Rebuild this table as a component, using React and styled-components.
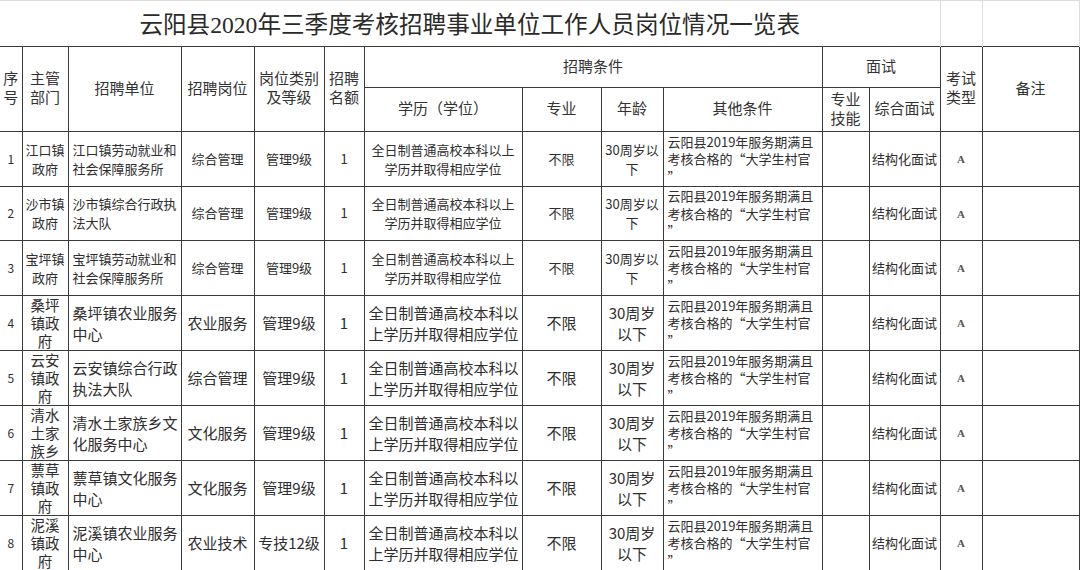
import React from "react";
import styled, { createGlobalStyle } from "styled-components";

const GlobalStyle = createGlobalStyle`
  html, body { margin: 0; padding: 0; background: #fff; }
  body { font-family: "Noto Sans CJK SC", "Liberation Sans", sans-serif; color: #2e2e2e; }
`;

const LINE = "#3a3a3a";
const FAINT = "#dcdcdc";

const Sheet = styled.table`
  width: 1079px;
  table-layout: fixed;
  border-collapse: collapse;
  border-spacing: 0;
`;

const TitleRow = styled.tr`
  height: 46px;
`;

const TitleCell = styled.td`
  border-top: 1px solid ${FAINT};
  border-right: 1px solid ${FAINT};
  padding: 0 0 2px;
  text-align: center;
  vertical-align: middle;
  font-family: "Liberation Serif", "Noto Sans CJK SC", serif;
  font-size: 23.6px;
  color: #2a2a2a;
  white-space: nowrap;
`;

const GhostCell = styled.td`
  border-top: 1px solid ${FAINT};
  border-right: 1px solid ${FAINT};
  padding: 0;
`;

const HeadRow = styled.tr`
  height: ${(p) => p.$h}px;
`;

const HeadCell = styled.th`
  border: 1px solid ${LINE};
  border-left: ${(p) => (p.$edge ? "none" : `1px solid ${LINE}`)};
  padding: 0;
  font-weight: 400;
  font-size: 15px;
  line-height: 19px;
  color: #333;
  text-align: center;
  vertical-align: middle;
  font-family: "Liberation Serif", "Noto Sans CJK SC", serif;
`;

const BodyRow = styled.tr`
  height: 54.6px;
`;

const Cell = styled.td`
  border: 1px solid ${LINE};
  border-left: ${(p) => (p.$edge ? "none" : `1px solid ${LINE}`)};
  padding: ${(p) => (p.$align === "left" ? "0 0 0 4px" : "0")};
  font-size: ${(p) => p.$size || 13}px;
  line-height: ${(p) => p.$lh || 18}px;
  text-align: ${(p) => p.$align || "center"};
  vertical-align: middle;
  color: #2e2e2e;
`;

const Line = styled.span`
  display: block;
  white-space: nowrap;
`;

const Grade = styled.span`
  font-family: "Liberation Serif", serif;
  font-size: 11px;
  font-weight: 700;
  color: #555;
`;

const widths = [22, 46, 113, 73, 70, 40, 158, 79, 62, 159, 47, 71, 42, 97];

const other = ["云阳县2019年服务期满且", "考核合格的“大学生村官", "”"];

const rows = [
  { no: "1", dept: ["江口镇", "政府"], unit: ["江口镇劳动就业和", "社会保障服务所"], post: "综合管理", level: "管理9级" },
  { no: "2", dept: ["沙市镇", "政府"], unit: ["沙市镇综合行政执", "法大队"], post: "综合管理", level: "管理9级" },
  { no: "3", dept: ["宝坪镇", "政府"], unit: ["宝坪镇劳动就业和", "社会保障服务所"], post: "综合管理", level: "管理9级" },
  { no: "4", big: true, dept: ["桑坪", "镇政", "府"], unit: ["桑坪镇农业服务", "中心"], post: "农业服务", level: "管理9级" },
  { no: "5", big: true, dept: ["云安", "镇政", "府"], unit: ["云安镇综合行政", "执法大队"], post: "综合管理", level: "管理9级" },
  { no: "6", big: true, dept: ["清水", "土家", "族乡"], unit: ["清水土家族乡文", "化服务中心"], post: "文化服务", level: "管理9级" },
  { no: "7", big: true, dept: ["蔈草", "镇政", "府"], unit: ["蔈草镇文化服务", "中心"], post: "文化服务", level: "管理9级" },
  { no: "8", big: true, dept: ["泥溪", "镇政", "府"], unit: ["泥溪镇农业服务", "中心"], post: "农业技术", level: "专技12级" },
];

const Lines = ({ items }) => items.map((t, i) => <Line key={i}>{t}</Line>);

function DataRow({ r }) {
  const size = r.big ? 15 : 13;
  const edu = r.big
    ? ["全日制普通高校本科以", "上学历并取得相应学位"]
    : ["全日制普通高校本科以上", "学历并取得相应学位"];
  const age = r.big ? ["30周岁", "以下"] : ["30周岁以", "下"];
  return (
    <BodyRow>
      <Cell $edge $size={12}>{r.no}</Cell>
      <Cell $size={r.big ? 14.5 : 13} $lh={r.big ? 18 : 19}>
        <Lines items={r.dept} />
      </Cell>
      <Cell $size={size} $lh={r.big ? 21 : 19} $align="left">
        <Lines items={r.unit} />
      </Cell>
      <Cell $size={size}>{r.post}</Cell>
      <Cell $size={size}>{r.level}</Cell>
      <Cell $size={size}>1</Cell>
      <Cell $size={size} $lh={r.big ? 21 : 19} $align={r.big ? "left" : "center"}>
        <Lines items={edu} />
      </Cell>
      <Cell $size={size}>不限</Cell>
      <Cell $size={size} $lh={r.big ? 21 : 19}>
        <Lines items={age} />
      </Cell>
      <Cell $size={13} $lh={17.5} $align="left">
        <Lines items={other} />
      </Cell>
      <Cell />
      <Cell $size={13}>结构化面试</Cell>
      <Cell>
        <Grade>A</Grade>
      </Cell>
      <Cell />
    </BodyRow>
  );
}

export default function App() {
  return (
    <>
      <GlobalStyle />
      <Sheet>
        <colgroup>
          {widths.map((w, i) => (
            <col key={i} style={{ width: w }} />
          ))}
        </colgroup>
        <tbody>
          <TitleRow>
            <TitleCell colSpan={12}>云阳县2020年三季度考核招聘事业单位工作人员岗位情况一览表</TitleCell>
            <GhostCell />
            <GhostCell />
          </TitleRow>
          <HeadRow $h={41}>
            <HeadCell $edge rowSpan={2}>
              <Line>序</Line>
              <Line>号</Line>
            </HeadCell>
            <HeadCell rowSpan={2}>
              <Line>主管</Line>
              <Line>部门</Line>
            </HeadCell>
            <HeadCell rowSpan={2}>招聘单位</HeadCell>
            <HeadCell rowSpan={2}>招聘岗位</HeadCell>
            <HeadCell rowSpan={2}>
              <Line>岗位类别</Line>
              <Line>及等级</Line>
            </HeadCell>
            <HeadCell rowSpan={2}>
              <Line>招聘</Line>
              <Line>名额</Line>
            </HeadCell>
            <HeadCell colSpan={4}>招聘条件</HeadCell>
            <HeadCell colSpan={2}>面试</HeadCell>
            <HeadCell rowSpan={2}>
              <Line>考试</Line>
              <Line>类型</Line>
            </HeadCell>
            <HeadCell rowSpan={2}>备注</HeadCell>
          </HeadRow>
          <HeadRow $h={44}>
            <HeadCell>学历（学位）</HeadCell>
            <HeadCell>专业</HeadCell>
            <HeadCell>年龄</HeadCell>
            <HeadCell>其他条件</HeadCell>
            <HeadCell>
              <Line>专业</Line>
              <Line>技能</Line>
            </HeadCell>
            <HeadCell>综合面试</HeadCell>
          </HeadRow>
          {rows.map((r) => (
            <DataRow key={r.no} r={r} />
          ))}
        </tbody>
      </Sheet>
    </>
  );
}
